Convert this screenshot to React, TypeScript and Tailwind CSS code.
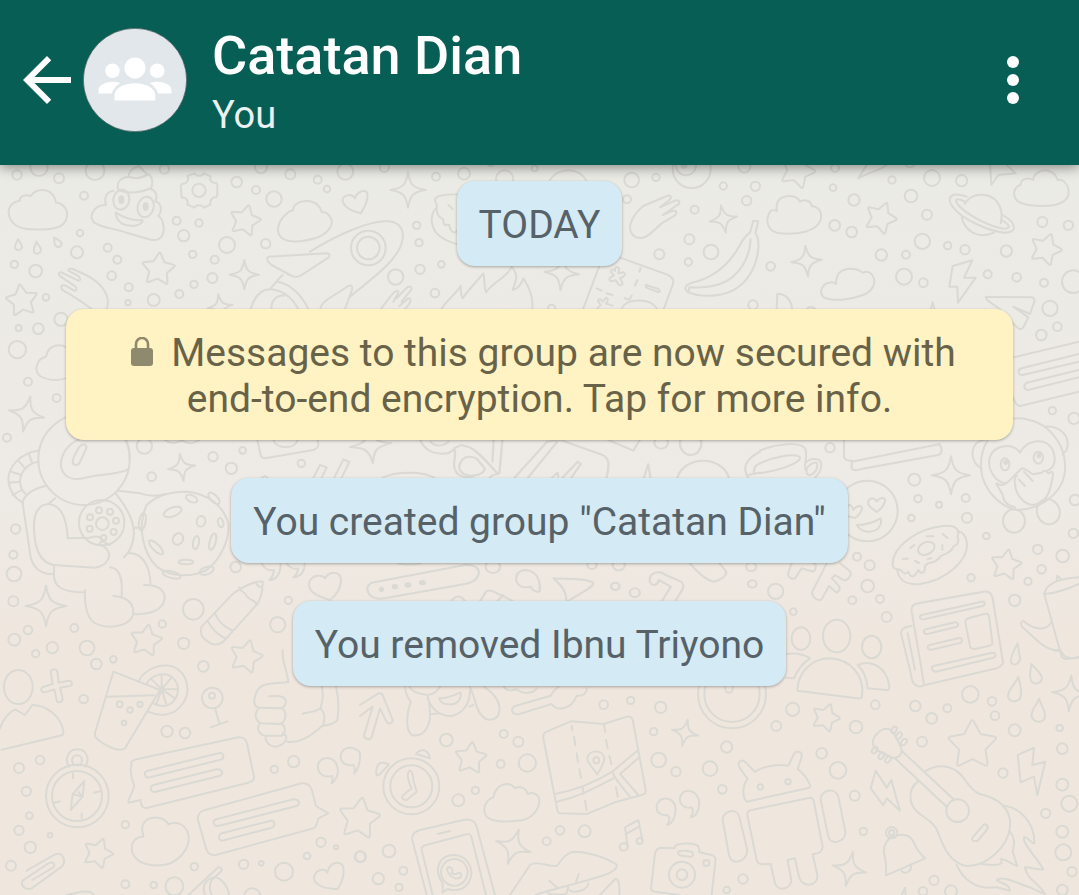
import React from "react";

/** One part of the doodle wallpaper, drawn on its own 3x grid */
type Patch = {
  x: number;
  y: number;
  sx?: number;
  circles: number[][]; // cx, cy, r
  stars: number[][]; // cx, cy, r, rotation
  sparkles: number[][]; // cx, cy, r, rotation
  ellipses?: number[][]; // cx, cy, rx, ry, rotation
  dots?: number[][]; // cx, cy, rx, ry
  paths: string[];
};

const PATCHES: Patch[] = [
  // top left: clouds, rocket, gear
  {
    x: 0,
    y: 160,
    circles: [
      [51, 45, 14], [117, 22, 26], [177, 55, 15], [285, 32, 28], [252, 107, 12], [240, 219, 10], [231, 277, 18],
      [323, 263, 12], [352, 299, 12], [43, 313, 11], [107, 333, 19], [335, 347, 13], [386, 382, 12], [384, 428, 8],
      [138, 412, 10], [461, 420, 18], [538, 402, 12], [582, 373, 11], [637, 354, 15], [644, 299, 12], [578, 283, 11],
      [551, 227, 17], [530, 182, 12], [597, 189, 11], [681, 255, 24], [797, 251, 14], [768, 90, 12], [822, 117, 23],
      [710, 66, 16], [493, 27, 14], [783, 22, 18], [871, 43, 15], [953, 59, 12], [981, 87, 10], [1036, 35, 24],
      [1153, 22, 14], [1308, 50, 12], [1250, 196, 11], [1257, 248, 11], [1260, 328, 14], [1324, 313, 10],
      [1187, 351, 23], [1305, 399, 13], [183, 478, 20], [56, 504, 9], [115, 506, 16], [52, 569, 26], [84, 665, 12],
      [170, 714, 12], [597, 91, 20], [1105, 264, 52], [1105, 264, 34],
    ],
    stars: [[66, 422, 52, -8], [475, 328, 54, 5], [735, 182, 51, 14]],
    sparkles: [[733, 344, 44, 0], [1224, 90, 53, 0], [80, 762, 54, 12], [660, 440, 38, -8]],
    ellipses: [[364, 119, 24, 30, 10], [437, 141, 24, 31, 15]],
    dots: [[364, 119, 9, 13], [437, 140, 9, 13]],
    paths: [
      "M60 122C35 125 22 145 27 165C32 190 55 207 95 208C140 210 175 207 190 192C205 175 205 150 190 138C183 130 172 127 168 128C165 105 148 90 128 90C110 90 98 100 93 108C75 102 58 108 60 122Z",
      "M316 135C285 135 265 165 280 185C290 200 340 205 380 218L455 240C485 243 495 220 490 195C488 180 482 172 475 168C490 150 480 125 466 125C475 105 465 90 452 88C462 65 455 45 443 43C435 40 425 22 415 18M412 20C395 25 385 38 386 50C360 52 348 70 355 88M318 135C312 115 318 95 340 92M355 88C370 102 420 100 452 84M386 50C405 58 425 55 443 43",
      "M347 158C350 190 375 200 405 197C420 195 430 185 427 180C400 185 375 175 347 158Z",
      "M584 40C588 50 607 50 611 40L632 49C627 62 636 71 649 68L652 74V106L648 112C638 110 628 120 631 134L612 143C606 133 588 133 583 143L562 134C566 120 556 110 545 113L542 78L546 71C558 73 568 62 563 48Z",
      "M862 160C838 178 828 205 838 225C850 250 900 248 945 235C985 222 1000 195 994 178C988 160 975 155 966 157C960 138 945 123 920 123C895 123 880 135 878 152C868 152 862 158 862 160Z",
      "M1082 160C1060 155 1035 145 1028 125C1025 105 1055 98 1065 115C1070 95 1095 85 1102 100C1106 120 1092 145 1082 160Z",
      "M930 275C1010 225 1110 180 1165 184C1205 188 1215 215 1205 250C1190 300 1130 345 1050 410",
      "M805 290L980 280C990 280 990 290 985 293L905 345C890 355 880 350 870 345L815 315C800 305 800 295 805 290Z",
      "M848 345L835 358L812 385M832 365C870 370 905 405 925 447M752 447C765 405 785 385 815 388C860 395 880 420 895 447M815 447C810 425 830 405 852 407",
      "M962 447C960 435 970 430 980 420L1045 378C1055 374 1058 380 1056 390L1035 447",
      "M55 238C48 250 42 258 46 265C52 273 62 272 66 263C67 255 58 245 55 238ZM110 245C103 260 98 270 103 277C110 285 122 280 123 270C123 260 113 255 110 245ZM162 232L164 252C168 264 182 264 185 252C186 244 172 238 162 232Z",
      "M275 447C245 425 215 405 190 392C178 382 185 372 197 377L222 392C232 392 232 382 222 376L182 350C170 340 180 333 190 340L235 362C245 362 240 350 232 346L205 332C205 325 215 325 225 330C260 345 295 360 315 395C325 415 325 435 320 447",
      "M1143 447C1155 430 1165 418 1175 405C1185 392 1197 388 1195 398L1180 425M1190 415L1218 385C1228 375 1238 380 1233 390L1205 425M1198 438L1225 415C1235 415 1235 425 1215 447",
      "M198 562C185 552 145 550 138 590C110 595 100 630 120 648C145 662 175 662 198 655",
    ],
  },
  // top middle: donut, flames, ticket
  {
    x: 360,
    y: 165,
    circles: [[312, 26, 18], [434, 42, 26], [524, 10, 9], [393, -8, 12], [575, 430, 11]],
    stars: [],
    sparkles: [[605, 324, 52, 4]],
    paths: [
      "M293 88C245 88 225 95 225 105C225 115 235 120 230 128C210 145 210 180 230 205C245 220 270 232 293 238M230 130C230 160 245 155 250 165C250 190 262 175 268 180C270 200 285 210 293 195M265 120L278 132",
      "M568 47C595 5 655 5 680 47",
      "M245 430C270 395 290 385 302 362C302 385 305 395 308 400C325 375 345 355 370 325C375 345 372 370 378 382C400 350 445 335 455 305C480 335 465 350 458 375C475 370 485 355 490 340C510 370 520 400 517 430",
      "M670 430L718 303M780 278L920 328C940 337 943 345 938 360L912 430",
      "M765 310C768 304 778 306 777 313L775 325L790 322C797 325 796 333 788 336L780 340L788 355C785 363 778 362 774 357L768 346L755 349C746 348 747 340 752 337L762 331L753 322C750 312 760 312 765 318Z",
      "M858 360L895 372C903 378 898 384 890 380L860 368C856 364 856 361 858 360ZM842 308L838 320M832 345L825 362M815 392L808 404L794 400M710 370L725 377M740 385L757 390",
      "M785 430C800 400 870 398 890 430M712 430L722 420L714 408C716 400 724 402 728 410L738 398C746 400 744 408 738 416L758 422",
    ],
  },
  // top right: banana, planet, paper plane
  {
    x: 600,
    y: 160,
    circles: [
      [95, 60, 22], [168, 52, 11], [81, 118, 12], [370, 78, 11], [466, 79, 14], [440, 122, 14], [284, 149, 12],
      [268, 238, 15], [178, 283, 15], [265, 306, 11], [333, 276, 22], [512, 319, 13], [459, 435, 14], [705, 24, 12],
      [699, 83, 10], [762, 120, 17], [704, 196, 16], [755, 216, 16], [844, 285, 17], [876, 60, 11], [996, 54, 24],
      [1085, 62, 17], [933, 108, 19], [981, 164, 15], [967, 244, 23], [1043, 257, 11], [1095, 269, 14],
      [918, 284, 12], [912, 350, 24], [970, 368, 13], [1163, 343, 12], [1250, 352, 13], [1219, 273, 17],
      [1327, 186, 15], [1405, 196, 14], [1332, 368, 12], [1420, 365, 34], [1350, 445, 23], [1372, 500, 13],
      [1324, 525, 16], [1357, 752, 11], [1422, 775, 17], [433, 20, 18], [275, 27, 57], [258, 16, 30],
      [930, 8, 14],
    ],
    stars: [[592, 32, 58, 20], [842, 174, 52, 22], [1337, 268, 52, 20]],
    sparkles: [[370, 177, 42, -10], [620, 303, 46, -5]],
    dots: [[252, 18, 10, 8]],
    paths: [
      "M510 155C495 180 500 215 540 220C590 225 650 215 662 180C668 155 655 140 635 138C635 125 615 115 600 125C590 105 550 100 533 125C528 135 530 150 531 153C525 150 515 150 510 155Z",
      "M690 368C665 370 655 400 672 412C700 425 750 420 790 405C825 390 830 360 815 343C805 332 795 335 788 338C770 322 735 322 718 338C708 350 708 365 708 372C702 368 695 366 690 368Z",
      "M1262 75C1240 80 1235 110 1255 125C1280 140 1360 145 1390 125C1412 110 1412 75 1385 60L1373 60C1365 35 1335 20 1310 40C1300 48 1300 55 1300 60C1280 50 1262 58 1262 75Z",
      "M130 138L200 108C212 104 217 112 208 120L180 142L225 122C240 118 242 130 232 135L188 165L220 152C232 152 232 162 222 168L185 190C165 205 150 230 125 234C95 236 85 210 93 188C100 165 115 150 130 138Z",
      "M460 182L475 184L466 220C480 235 478 280 462 320C440 370 400 400 350 406C310 410 280 405 262 395C250 385 258 375 270 370C340 355 390 310 420 255C430 235 440 225 450 218ZM452 238C450 290 420 350 360 372C330 382 290 383 268 382L266 396",
      "M1094 132C1108 108 1135 100 1160 106C1195 115 1212 150 1202 190M1085 172C1095 215 1135 238 1182 218",
      "M1100 110C1050 92 1036 115 1062 145C1090 180 1170 215 1215 218C1250 218 1254 192 1208 165M1094 125C1070 112 1060 118 1075 135C1100 165 1170 200 1210 206C1235 206 1230 195 1205 180",
      "M1058 318L1117 301L1092 353L1127 353L1074 428L1072 380L1048 380Z",
      "M1158 410L1295 412C1303 412 1305 420 1302 428L1290 462L1240 440L1285 472L1270 502C1262 512 1255 508 1238 488M1158 410C1155 420 1175 430 1200 447",
      "M530 447L532 402C560 400 575 425 576 447M993 447L998 427L1003 447M620 447C628 440 638 440 646 447",
      "M775 55L800 15M775 55C800 40 830 35 860 15M1170 15L1174 75L1195 45L1247 40L1220 15",
      "M1237 593L1437 545M1437 695L1260 738C1245 738 1245 720 1238 710",
      "M1437 582L1265 625C1252 628 1252 645 1268 645L1437 605M1437 630L1280 668C1270 675 1270 690 1285 690L1437 652",
    ],
  },
  // middle left: astronaut, moon, crayon
  {
    x: 0,
    y: 430,
    circles: [
      [21, 23, 12], [433, 48, 23], [455, 140, 13], [639, 80, 14], [694, 115, 17], [728, 61, 10], [904, 100, 11],
      [47, 297, 14], [40, 374, 12], [42, 432, 22], [40, 514, 15], [84, 600, 13], [43, 629, 18], [157, 653, 17],
      [107, 671, 11], [223, 594, 12], [261, 654, 22], [289, 702, 16], [340, 688, 10], [487, 582, 11],
      [551, 640, 17], [580, 538, 31], [707, 411, 16], [865, 511, 11], [833, 584, 23], [252, 88, 137],
      [305, 278, 68], [297, 241, 9], [330, 245, 9], [348, 272, 9], [341, 306, 9], [311, 323, 8], [269, 296, 9],
      [270, 262, 9], [307, 281, 19],
    ],
    stars: [[438, 632, 52, 10], [738, 680, 54, 15]],
    sparkles: [[545, 112, 41, -8], [138, 528, 61, 0]],
    ellipses: [
      [427, 275, 10, 26, 10], [518, 246, 28, 13, -20], [575, 206, 18, 10, 25], [642, 205, 22, 10, 45],
      [603, 274, 13, 16, 15], [662, 278, 8, 14, -15], [534, 327, 15, 18, 30], [588, 338, 9, 20, 10],
      [468, 352, 28, 10, 45], [558, 396, 22, 7, 0], [515, 434, 28, 10, 15], [620, 422, 22, 11, -20],
      [638, 335, 9, 25, 15],
    ],
    paths: [
      "M240 28C200 40 180 80 183 110C190 140 215 152 250 145C290 130 340 138 385 118M378 30C388 50 390 70 389 90",
      "M245 45C255 40 262 48 258 57L238 100C232 108 218 105 218 95C218 85 235 50 245 45Z",
      "M113 62C60 70 25 110 25 150C28 185 45 205 68 218M115 95C80 100 60 130 60 155C62 175 68 185 75 190M87 72L97 100M55 92L76 116M33 125L65 135M27 158L60 155M38 195L65 180",
      "M138 168C100 175 70 195 68 220C75 270 85 330 90 370C95 410 120 435 162 432",
      "M165 205L145 222C110 225 100 260 102 300C105 350 115 395 160 405L285 413C310 410 335 390 325 365C315 345 300 345 295 345L305 333L330 345M145 222C180 225 200 260 203 325L270 323C285 318 300 318 305 328",
      "M347 190C370 220 400 260 402 310C400 345 385 370 372 382M162 410V440C165 470 185 487 255 487M255 480V510C260 570 280 590 335 590C375 588 400 570 400 545C400 520 380 500 340 498M365 498C368 450 362 415 330 412M385 370C420 365 450 400 452 465M432 465C470 462 495 480 494 505C490 540 450 555 400 552",
      "M355 182L420 190C450 200 470 200 497 192M402 293L425 293",
      "M440 225C470 195 510 185 560 185C620 190 670 225 685 280C690 330 660 390 620 420C570 445 510 440 470 410C430 370 410 290 440 225Z",
      "M772 30L782 75C785 85 792 86 800 84L940 60C955 55 958 45 953 30M820 30C830 58 885 58 893 30M495 30C510 42 530 42 545 30C560 42 580 42 598 30",
      "M940 143L960 105L980 112L965 143M1003 143L1030 88L1048 96L1025 143M785 143L795 138L803 143",
      "M605 590L700 490C730 470 760 452 788 455C788 480 785 510 765 530L670 635C650 650 635 645 620 632C600 620 600 605 605 590ZM645 550C655 575 670 590 695 600M622 572C635 595 650 612 675 625M718 472C725 490 735 485 740 498C750 515 765 505 770 525M768 457C772 470 780 472 787 472",
      "M990 510C960 500 925 490 927 460C935 430 970 435 975 445C985 425 1015 420 1023 445C1025 470 1010 495 990 510Z",
      "M785 400C795 420 810 422 822 420C820 435 815 445 808 450C830 450 842 430 842 400M860 400C870 415 885 418 895 415C893 428 888 436 880 442C905 440 915 420 914 400",
    ],
  },
  // strips between the centre bubbles
  {
    x: 220,
    y: 430,
    sx: 2.6133,
    circles: [[713, 410, 19], [1033, 469, 11], [1084, 488, 13], [1391, 462, 11], [972, 405, 12], [1042, 405, 16], [1388, 410, 13], [1153, 38, 18]],
    stars: [],
    sparkles: [[394, 45, 54, -6]],
    ellipses: [[1230, 40, 28, 35, 0]],
    dots: [[422, 478, 7, 8], [457, 470, 8, 8], [491, 465, 9, 8], [529, 458, 9, 8]],
    paths: [
      "M410 455L640 405C670 402 680 420 675 435C670 455 650 460 640 462L430 505C400 510 385 495 385 475C388 460 395 457 410 455Z",
      "M835 485C840 440 820 420 795 420C770 425 768 455 785 468C795 475 805 472 812 470C815 480 825 487 835 485Z",
      "M872 445C900 448 950 442 975 458C980 470 940 490 910 513M872 445C890 465 905 480 905 513",
      "M1123 455C1120 425 1150 420 1165 435L1205 455C1215 465 1212 475 1205 485L1190 513M1125 458C1130 470 1145 465 1147 450L1178 470L1155 513",
      "M680 513L695 485C700 480 710 480 715 485L765 513M725 513L740 495M605 513C615 495 630 495 640 513M1228 400C1250 430 1270 450 1290 455C1310 450 1330 435 1320 420L1305 400",
      "M523 30C535 60 560 75 595 70C610 62 610 60 612 55C620 80 605 100 615 120C620 140 640 143 660 143M612 55L630 45L648 50C665 55 690 85 725 130M715 30L712 95M738 30L730 130C720 135 710 133 705 143M625 110C630 80 650 75 670 85L692 115C690 135 660 140 645 135C630 130 625 120 625 110ZM550 35C560 50 585 50 597 35",
      "M770 143L855 35L885 30L805 143M890 30L1000 75C1015 85 1020 95 1010 143M895 143L935 95L943 102L918 143M868 143L882 128L884 140",
      "M1015 30L1080 62L1097 30M1108 143L1119 103L1125 143M1195 143C1215 75 1310 75 1330 143M425 143C460 123 530 123 560 143M465 400C480 405 510 405 525 400",
      "M1380 143C1365 115 1370 90 1411 65M1395 130C1395 110 1400 105 1411 100M1380 135L1411 128",
    ],
  },
  // middle right: monkey, donut, newspaper
  {
    x: 760,
    y: 430,
    circles: [
      [210, 53, 14], [463, 149, 18], [474, 206, 11], [537, 224, 9], [454, 264, 10], [617, 204, 12], [621, 263, 15],
      [679, 318, 10], [833, 358, 14], [908, 378, 19], [845, 418, 13], [804, 454, 11], [764, 511, 17],
      [945, 210, 16], [940, 310, 14], [633, 443, 11], [323, 468, 19], [329, 406, 15], [291, 380, 12],
      [277, 511, 12], [360, 507, 12], [380, 561, 15], [47, 484, 23], [100, 545, 10], [322, 243, 91],
    ],
    stars: [[738, 405, 50, 10]],
    sparkles: [[573, 136, 57, 0]],
    ellipses: [
      [735, 103, 13, 18, 0], [835, 83, 14, 18, 0], [762, 273, 33, 35, 0], [865, 245, 34, 38, -20],
      [499, 355, 26, 18, -25], [123, 626, 28, 34, 0], [230, 618, 41, 49, 0], [335, 651, 29, 34, 0],
    ],
    dots: [[737, 97, 7, 8], [837, 77, 7, 8]],
    paths: [
      "M683 30C660 70 660 110 667 140C680 185 720 230 770 240C840 240 910 190 915 120C918 70 900 30 860 -5C830 -30 780 -40 757 -33",
      "M672 30C630 35 625 90 665 117M855 -10C890 -15 925 10 923 45C922 60 915 68 908 72",
      "M738 160C700 155 680 110 690 80C705 40 765 40 780 68C800 25 865 20 880 65C890 95 880 115 862 122",
      "M710 160C725 170 735 162 745 155L785 115C798 115 810 130 820 133L845 128C850 120 860 122 865 130C880 120 882 130 876 150C870 180 865 215 820 225C790 225 765 190 765 160C762 150 765 140 770 138M710 162C715 180 730 185 730 205C735 220 750 228 765 232M776 148L795 168M792 125L818 153",
      "M350 246C335 235 320 225 325 212C335 200 345 205 350 215C360 200 378 200 375 215C370 230 360 240 350 246ZM262 228C270 220 278 230 280 240C290 225 305 225 306 235C305 245 295 258 285 264L262 258M290 285C320 285 345 275 362 265C368 290 350 305 325 305C310 305 300 300 290 285Z",
      "M398 400C400 350 470 295 550 288C590 285 600 300 592 320C600 340 590 345 580 350C570 375 550 370 540 380C520 410 500 390 495 410C495 435 480 430 475 420C460 450 450 440 445 425C430 440 430 420 415 418C400 418 397 410 398 400ZM412 420C415 450 440 465 480 462C560 450 625 390 621 340C618 315 605 305 597 305",
      "M500 319h20M548 312l15 12M547 345v14M463 345l-12 10M428 386h15M465 393l12 6M502 388l12-4",
      "M485 720L455 545C452 530 460 522 475 520L670 485C685 482 695 490 698 505L728 690M455 588C430 590 420 600 424 615L450 720M443 610L465 720",
      "M485 555L665 515C675 513 678 525 668 528L492 568C480 570 475 560 485 555ZM497 598L585 577C596 576 598 588 588 591L502 612C490 612 488 602 497 598ZM508 645L597 624C608 623 608 636 600 639L515 659C502 660 500 650 508 645ZM520 708L697 668C708 668 710 680 700 683L528 725C515 725 512 712 520 708Z",
      "M625 565L675 551C682 550 686 555 687 560L697 635C698 642 694 646 688 647L645 657C637 658 632 655 630 648L616 578C615 570 618 567 625 565Z",
      "M855 485C865 455 910 445 957 442M852 490C865 495 920 480 957 462M852 490L905 680C910 690 925 688 957 680M890 448L892 437L902 446M790 572C820 600 860 605 875 575M785 575C780 590 790 595 800 602C830 630 860 665 900 660",
      "M95 400L86 425C80 440 95 450 105 445L125 415L160 425C170 415 170 402 160 400M200 400L157 485C152 500 175 515 185 508L207 468L230 488C245 480 240 470 225 455L215 445L225 435L250 450C265 455 278 430 268 422L240 400",
      "M0 100C40 80 100 70 118 80C130 90 90 115 0 130M0 62C50 40 120 35 135 55C145 75 130 105 137 120M137 98C155 80 185 85 184 105C182 125 175 135 165 142M140 125C135 110 172 85 172 105C172 125 150 145 140 130",
      "M252 30V80C255 92 265 92 275 92M275 95L540 42M275 95V115C280 122 290 122 300 118L535 75C548 70 548 50 535 42",
      "M773 640C765 655 745 690 755 700C765 708 780 700 780 685Z",
    ],
  },
  // bottom left: drink, compass, chat bubbles
  {
    x: 0,
    y: 650,
    circles: [
      [251, 147, 13], [610, 49, 16], [501, 244, 17], [555, 249, 16], [120, 330, 13], [57, 354, 15], [79, 424, 14],
      [88, 497, 10], [57, 541, 14], [150, 556, 7], [91, 592, 17], [33, 647, 15], [376, 524, 11], [583, 650, 11],
      [376, 703, 12], [461, 705, 10], [523, 709, 27], [731, 643, 14], [784, 640, 7], [852, 665, 27],
      [963, 577, 14], [1008, 592, 6], [921, 618, 10], [881, 335, 17], [823, 358, 11], [1080, 620, 16],
      [757, 740, 25], [359, 163, 9], [390, 180, 8], [420, 163, 8], [372, 219, 7], [637, 144, 31], [636, 137, 9],
      [232, 438, 94], [231, 438, 75], [231, 331, 15],
    ],
    stars: [[294, 610, 49, 20]],
    sparkles: [],
    ellipses: [[55, 111, 43, 51, 0]],
    paths: [
      "M0 235C10 205 30 185 45 178L75 195L97 165C140 165 185 200 190 245C192 255 185 256 180 257L5 299",
      "M152 65C155 55 170 55 172 65L176 98L205 92C218 92 220 105 208 108L180 113L188 145C188 160 172 160 170 150L163 118L135 127C122 128 120 115 130 110L158 102Z",
      "M340 65L480 120L375 295C365 303 355 300 345 297C320 288 300 275 290 265C283 258 284 250 286 245ZM320 140L462 136",
      "M415 95C435 55 480 40 520 50C565 70 575 130 545 165C520 200 475 200 445 185M440 100C460 70 500 65 520 85C545 110 535 150 505 165C490 170 475 168 460 160M485 118L485 75M485 118L515 82M485 118L535 118M485 118L525 145M485 118L498 160M485 118L470 160M485 118L455 88",
      "M645 175L658 220M632 232L682 214",
      "M865 96C820 102 785 95 770 125C755 160 765 175 785 173L840 175C860 172 862 150 850 142C835 136 820 138 808 139M865 96C862 60 845 40 848 0M775 175C760 195 768 215 785 220L840 222C860 215 860 185 848 177M778 222C768 240 780 255 795 257L845 257C860 248 856 228 845 222M797 258C795 275 805 288 825 290C850 288 862 270 858 258L848 250M862 275C900 280 930 260 970 225C975 200 975 190 962 175C935 190 930 185 908 191M962 172C970 150 970 130 965 108M1008 108C1015 140 1018 175 1012 210C1005 222 985 225 968 228",
      "M207 350C190 320 210 298 232 298C262 298 270 330 255 350M253 393L218 432L212 480L248 440ZM218 432L248 440L235 425M219 370v15M245 490v14M162 458l18-4M282 428l18-4",
      "M395 345C390 335 400 330 410 328L715 262C730 260 738 268 741 280L762 380C764 392 755 395 745 398L440 474C428 476 422 465 422 450L385 458C380 455 405 415 402 405C395 385 388 360 395 345Z",
      "M440 363L655 310C672 305 675 325 662 329L450 382C435 386 430 368 440 363ZM460 405L650 358C668 355 672 374 658 378L468 425C450 430 448 410 460 405Z",
      "M615 480L905 400C925 398 933 408 937 425L948 468L985 490L955 505C950 530 945 535 930 538L650 614C630 618 622 610 618 595L594 510C592 495 600 483 615 480Z",
      "M648 508L880 448C895 445 905 462 890 468L655 528C640 530 636 512 648 508ZM665 550L810 513C825 510 828 528 815 533L672 571C655 575 652 555 665 550Z",
      "M430 560C400 560 390 585 398 610C410 640 450 650 490 645C530 640 570 600 566 560C562 525 530 510 505 523C490 495 440 495 428 525C424 540 428 550 430 558Z",
      "M80 662L165 613C190 605 200 635 185 650L95 715C75 722 60 705 68 692L145 640C160 632 168 645 160 652L97 690",
      "M995 400C998 390 1000 385 996 378C970 385 955 370 953 350C955 325 985 315 1005 335C1020 355 1015 385 995 400ZM1063 370C1065 358 1066 350 1060 345C1035 350 1020 335 1022 315C1027 292 1055 285 1078 305C1085 325 1075 358 1063 370",
      "M1012 718C980 715 940 710 942 680C950 655 975 655 982 668C990 635 1020 630 1030 650C1033 675 1025 700 1012 718Z",
      "M565 735L655 652C665 650 668 660 662 665L635 690C625 710 630 725 635 735M615 735C605 710 615 690 640 682C665 682 685 710 687 735M200 735C230 728 255 720 275 728L280 735",
    ],
  },
  // bottom middle: clock, map, phone
  {
    x: 360,
    y: 680,
    circles: [
      [259, 180, 19], [431, 162, 12], [475, 185, 15], [422, 252, 12], [502, 249, 26], [346, 331, 11],
      [295, 361, 18], [731, 74, 13], [812, 61, 11], [902, 82, 17], [881, 155, 11], [896, 240, 22], [948, 275, 14],
      [1050, 266, 22], [600, 451, 13], [674, 454, 18], [560, 484, 12], [87, 513, 19], [2, 530, 16], [55, 596, 17],
      [130, 572, 12], [117, 622, 11], [154, 319, 84], [154, 319, 63], [709, 241, 9], [283, 577, 40],
      [966, 584, 39], [966, 584, 16], [1039, 549, 9],
    ],
    stars: [[332, 235, 52, 6], [-2, 416, 68, 8]],
    sparkles: [[975, 158, 40, 12], [460, 500, 54, 18]],
    ellipses: [[791, 501, 12, 11, 0], [839, 483, 9, 9, 0]],
    paths: [
      "M148 273C155 270 160 285 160 300L170 335L140 360C128 360 122 352 130 345L155 325C145 305 138 280 148 273ZM50 285C45 265 55 245 70 248L87 253L62 280C58 285 52 287 50 285ZM168 222C180 205 205 205 210 235L195 230Z",
      "M0 75L55 40C65 38 68 42 70 50L98 120C98 132 82 135 78 122L60 85L35 172C28 182 12 178 12 165L38 80L0 108",
      "M135 20C135 40 145 55 152 65C140 100 135 150 155 165C195 175 212 130 210 100C210 75 205 60 203 45C175 42 155 35 148 20M203 45C220 45 235 30 240 20M203 55C215 90 245 110 275 108C310 100 330 70 330 30M210 103L240 100M330 22C350 60 345 100 380 118C420 125 430 85 405 50C395 35 380 28 372 20M340 75L328 80M237 55C255 55 285 45 302 37C305 60 290 75 265 73C250 73 240 65 237 55Z",
      "M432 20C440 35 455 32 470 28C490 45 520 40 530 25M680 25C680 45 665 48 650 47C635 90 590 95 575 72L475 103C455 105 450 85 465 78L572 47C578 35 585 28 595 20",
      "M400 352C375 360 365 390 380 410C400 428 450 427 490 420C525 410 545 375 535 350C525 338 512 338 503 342C500 325 480 315 465 325C450 305 410 305 400 352Z",
      "M560 155L632 124L732 132L800 110C812 108 816 112 818 120L857 330C858 340 855 342 845 345L770 365L680 402L600 400C593 398 592 392 591 385L550 175C549 165 552 158 560 155Z",
      "M585 342C650 330 700 310 757 275L832 212M588 366C660 350 710 320 760 295M757 275C765 300 790 325 812 352M838 232L780 282L835 345",
      "M635 138l2 12M642 170l4 26M650 220l4 26M658 268l5 26M667 320l4 22M675 362l5 28M732 134l4 22M738 180l5 24M748 228l6 24M768 322l5 28",
      "M712 283C700 265 682 250 682 235C685 208 730 208 733 235C733 250 722 265 712 283Z",
      "M922 435C930 420 930 410 922 405C900 408 888 395 890 378C895 352 930 345 945 375C950 405 940 430 922 435ZM992 412C1000 400 1000 390 995 382C970 388 958 370 960 352C970 325 1005 325 1017 360C1020 385 1010 410 992 412Z",
      "M803 500L795 442L835 420L848 485M797 462L838 440",
      "M200 645L157 480C155 465 162 455 180 450L310 420C335 415 345 425 350 440L405 645M218 645L185 510C183 500 190 497 198 495L320 463C328 460 332 463 334 470L378 645M233 462L270 453",
      "M248 637V610C220 570 235 525 283 525C335 528 350 590 315 620C300 632 275 632 262 627Z",
      "M262 565C268 555 275 565 278 572L275 578C282 588 290 580 300 578C312 590 295 598 285 595C270 590 260 575 262 565Z",
      "M450 645L510 555C530 540 560 560 590 558C600 550 610 520 640 515C680 515 730 530 768 552C775 560 765 570 750 578C720 595 600 620 525 645M568 602L590 622M656 582L648 607M565 640C575 645 610 645 620 640L625 618M628 630C640 640 680 635 685 610M720 645L765 597C775 595 780 610 778 645",
      "M960 645L890 636C880 635 872 632 873 625L885 520C888 508 895 503 905 503L943 505L948 495C970 488 1000 490 1012 496C1018 500 1018 508 1018 517L1055 525C1065 528 1068 535 1066 545L1055 645",
      "M955 515C960 510 990 512 998 518C1002 525 998 530 990 530L965 527C953 525 952 518 955 515Z",
    ],
  },
  // bottom right: robot, guitar, bell
  {
    x: 720,
    y: 650,
    circles: [
      [218, 178, 20], [169, 228, 15], [20, 291, 17], [305, 310, 16], [408, 231, 19], [466, 164, 13], [586, 168, 16],
      [682, 175, 12], [635, 205, 16], [606, 275, 15], [751, 133, 25], [816, 154, 13], [825, 197, 13],
      [884, 241, 18], [849, 369, 14], [354, 361, 25], [404, 437, 15], [7, 418, 13], [430, 544, 11], [69, 687, 14],
      [20, 720, 10], [642, 691, 14], [609, 724, 13], [693, 724, 18], [977, 490, 14], [1019, 234, 10],
      [1027, 296, 16], [1027, 404, 18], [1048, 461, 24], [1027, 545, 18], [1030, 607, 24], [1056, 665, 14],
      [1027, 720, 16], [36, 133, 102], [36, 133, 83], [121, 411, 8], [204, 395, 8], [515, 548, 17], [515, 548, 8],
      [713, 482, 34],
    ],
    stars: [[317, 203, 46, 20], [757, 286, 80, 0]],
    sparkles: [[388, 657, 52, 12], [1050, 130, 54, 4]],
    ellipses: [
      [27, 112, 12, 16, 0], [522, 240, 7, 11, 30], [537, 257, 7, 11, 40], [552, 276, 7, 11, 45],
      [464, 300, 7, 11, 35], [484, 317, 7, 11, 35], [504, 328, 7, 11, 35],
    ],
    paths: [
      "M232 120C235 60 280 25 330 25C390 28 435 75 426 140C425 147 415 145 410 145L245 124C235 124 232 122 232 120ZM198 12C230 8 255 15 270 25C240 45 230 65 222 85L198 83M413 45C450 30 500 45 508 110C508 120 505 122 498 120L443 115C440 85 430 60 413 45Z",
      "M570 60L576 90C585 112 600 112 612 106L830 55C848 48 852 35 848 30M605 60L612 106",
      "M895 80C885 105 862 120 864 140C870 160 900 158 903 135C906 115 898 95 895 80ZM934 42C932 65 925 80 935 95C950 108 970 95 965 80C960 65 945 55 934 42ZM957 146C948 170 932 180 935 200C942 220 970 220 975 200C977 180 962 165 957 146Z",
      "M80 455C65 440 68 405 83 387L60 355C48 335 65 325 78 338L105 366C130 348 170 342 205 347L220 315C228 298 248 305 245 320L233 357C250 370 262 385 270 405C272 412 268 414 262 415L90 453Z",
      "M95 480L270 443C278 443 280 447 281 452L308 590C308 602 300 610 278 613L292 675C295 710 245 715 237 680L225 625L203 630L214 690C212 720 172 725 165 700L152 642L130 643C118 643 112 640 110 630L82 495C80 485 85 482 95 480ZM8 510C5 485 50 470 58 500L82 600C82 635 35 650 27 615ZM302 450C300 420 345 410 355 440L376 545C378 580 330 585 325 560Z",
      "M467 362L500 413L514 390L540 482L500 445L490 466L452 415ZM893 315L942 293L937 345L976 335L952 436L942 380L902 397Z",
      "M498 676L615 625C600 610 590 600 585 585C575 555 550 550 530 557L512 562C490 580 488 600 495 625C500 645 498 660 498 676ZM542 658C550 675 575 670 573 645",
      "M480 243C500 228 515 240 522 250L543 292C548 305 542 315 535 320C520 328 510 322 500 315L470 300C452 285 455 262 480 243ZM525 325L680 470M548 305L703 450",
      "M617 363C660 335 710 350 735 390C750 410 760 425 780 432C840 445 875 480 870 530C865 590 800 650 740 648C690 640 670 590 655 550C640 500 580 500 572 450C568 420 580 405 593 395",
      "M758 562L790 525C800 518 808 532 800 540L775 570C765 578 752 572 758 562Z",
      "M848 467C900 470 945 520 943 580C935 585 925 560 912 562C905 580 950 620 970 658C955 662 930 650 915 652C920 690 960 700 975 733M870 545C890 570 880 590 878 605L892 648C870 640 855 625 842 628C850 640 845 650 785 642M710 645C730 690 770 720 830 712L870 722C870 700 840 700 830 690C850 675 890 700 930 712L975 733M545 735L555 713L557 735",
      "M1000 0C1010 5 1020 0 1025 5C1030 25 1060 28 1077 22",
    ],
  },
];

/** Five-pointed star with softened tips */
function starPath(r: number) {
  const pts = Array.from({ length: 10 }, (_, i) => {
    const a = (i * Math.PI) / 5 - Math.PI / 2;
    const k = i % 2 ? r * 0.52 : r;
    return [Math.cos(a) * k, Math.sin(a) * k];
  });
  const mix = (a: number[], b: number[], t: number) =>
    `${(a[0] + (b[0] - a[0]) * t).toFixed(1)} ${(a[1] + (b[1] - a[1]) * t).toFixed(1)}`;
  let d = "";
  for (let i = 0; i < 10; i += 2) {
    const prev = pts[(i + 9) % 10];
    const tip = pts[i];
    const next = pts[i + 1];
    d += `${i ? "L" : "M"}${mix(tip, prev, 0.22)}Q${mix(tip, tip, 0)} ${mix(tip, next, 0.22)}L${mix(next, next, 0)}`;
  }
  return d + "Z";
}

function sparklePath(r: number) {
  const a = r * 0.12;
  const b = r * 0.28;
  return `M0 ${-r}C${a} ${-b} ${b} ${-a} ${r} 0C${b} ${a} ${a} ${b} 0 ${r}C${-a} ${b} ${-b} ${a} ${-r} 0C${-b} ${-a} ${-a} ${-b} 0 ${-r}Z`;
}

function Wallpaper() {
  return (
    <svg
      aria-hidden="true"
      viewBox="0 165 1079 730"
      preserveAspectRatio="xMinYMin slice"
      className="absolute inset-0 h-full w-full"
    >
      {PATCHES.map((p, i) => (
        <g
          key={i}
          transform={`translate(${p.x} ${p.y}) scale(${1 / (p.sx ?? 3)} ${1 / 3})`}
          fill="none"
          stroke="#dbd9d4"
          strokeWidth={6}
          strokeLinecap="round"
          strokeLinejoin="round"
        >
          {p.circles.map(([x, y, r], k) => (
            <circle key={k} cx={x} cy={y} r={r} />
          ))}
          {p.stars.map(([x, y, r, rot], k) => (
            <path key={k} d={starPath(r)} transform={`translate(${x} ${y}) rotate(${rot})`} />
          ))}
          {p.sparkles.map(([x, y, r, rot], k) => (
            <path key={k} d={sparklePath(r)} transform={`translate(${x} ${y}) rotate(${rot})`} />
          ))}
          {p.ellipses?.map(([x, y, rx, ry, rot], k) => (
            <ellipse key={k} rx={rx} ry={ry} transform={`translate(${x} ${y}) rotate(${rot})`} />
          ))}
          {p.dots?.map(([x, y, rx, ry], k) => (
            <ellipse key={k} cx={x} cy={y} rx={rx} ry={ry} fill="#dbd9d4" stroke="none" />
          ))}
          {p.paths.map((d, k) => (
            <path key={k} d={d} />
          ))}
        </g>
      ))}
    </svg>
  );
}

function GroupAvatar() {
  return (
    <svg aria-hidden="true" viewBox="250 84 314 314" className="size-[104px] shrink-0">
      <circle cx="407" cy="241" r="156" fill="#e1e7ea" stroke="#3d4f50" strokeWidth="2" />
      <g fill="#fff">
        <circle cx="339" cy="213" r="22" />
        <circle cx="474" cy="213" r="22" />
        <circle cx="407" cy="205" r="32" />
        <path d="M345 303V286C345 267 372 251 407 251S468 267 468 286V303Z" />
        <path d="M297 282V271C297 257 316 246 339 246C348 246 356 247 363 250C350 257 341 268 337 282Z" />
        <path d="M517 282V271C517 257 498 246 475 246C466 246 458 247 451 250C464 257 473 268 477 282Z" />
      </g>
    </svg>
  );
}

function LockIcon() {
  return (
    <svg aria-hidden="true" viewBox="0 0 22 29" className="mr-[18px] ml-2 inline-block h-[29px] w-[22px] align-baseline">
      <path d="M5 13V7a6 6 0 0 1 12 0v6" fill="none" stroke="#8f896e" strokeWidth="2.6" />
      <rect y="11" width="22" height="18" rx="3" fill="#8f896e" />
    </svg>
  );
}

function SystemBubble({ children }: { children: React.ReactNode }) {
  return (
    <p className="rounded-[18px] bg-[#d4eaf4] px-[22px] pt-[21px] pb-[18px] text-center text-[39px] leading-[46px] text-[#566168] shadow-[0_1px_3px_rgba(0,0,0,0.3)]">
      {children}
    </p>
  );
}

export default function App() {
  return (
    <div className="flex min-h-screen flex-col font-[Roboto,sans-serif]">
      <header className="relative z-10 flex items-center bg-[#075e54] pt-[21px] pr-[42px] pb-[26px] pl-[23px] text-white shadow-[0_2px_12px_rgba(0,0,0,0.45)]">
        <button type="button" aria-label="Back" className="mr-3 shrink-0">
          <svg viewBox="4 4 16 16" className="block size-12" fill="currentColor">
            <path d="M20 11H7.83l5.59-5.59L12 4l-8 8 8 8 1.41-1.41L7.83 13H20v-2z" />
          </svg>
        </button>
        <GroupAvatar />
        <div className="ml-[25px] min-w-0 flex-1">
          <h1 className="truncate text-[54px] leading-[70px] font-medium">Catatan Dian</h1>
          <p className="text-[38px] leading-[48px] text-[#eaf1f0]">You</p>
        </div>
        <button type="button" aria-label="More options" className="shrink-0">
          <svg viewBox="0 0 48 48" className="block size-12" fill="currentColor">
            <circle cx="24" cy="6" r="6" />
            <circle cx="24" cy="24" r="6" />
            <circle cx="24" cy="42" r="6" />
          </svg>
        </button>
      </header>

      <main className="relative flex-1 overflow-hidden bg-linear-to-b from-[#ebebe6] via-[#eeeae5] via-45% to-[#efe7de] to-65%">
        <Wallpaper />
        <div className="relative flex flex-col items-center px-[66px] pt-4 pb-8">
          <SystemBubble>TODAY</SystemBubble>
          <button
            type="button"
            className="mt-[43px] w-full rounded-[18px] bg-[#fff3c4] px-12 pt-[21px] pb-[18px] text-center text-[39px] leading-[46px] text-[#686249] shadow-[0_1px_3px_rgba(0,0,0,0.3)]"
          >
            <LockIcon />
            Messages to this group are now secured with end-to-end encryption. Tap for more info.
          </button>
          <div className="mt-[38px] flex flex-col items-center gap-[38px]">
            <SystemBubble>You created group "Catatan Dian"</SystemBubble>
            <SystemBubble>You removed Ibnu Triyono</SystemBubble>
          </div>
        </div>
      </main>
    </div>
  );
}
